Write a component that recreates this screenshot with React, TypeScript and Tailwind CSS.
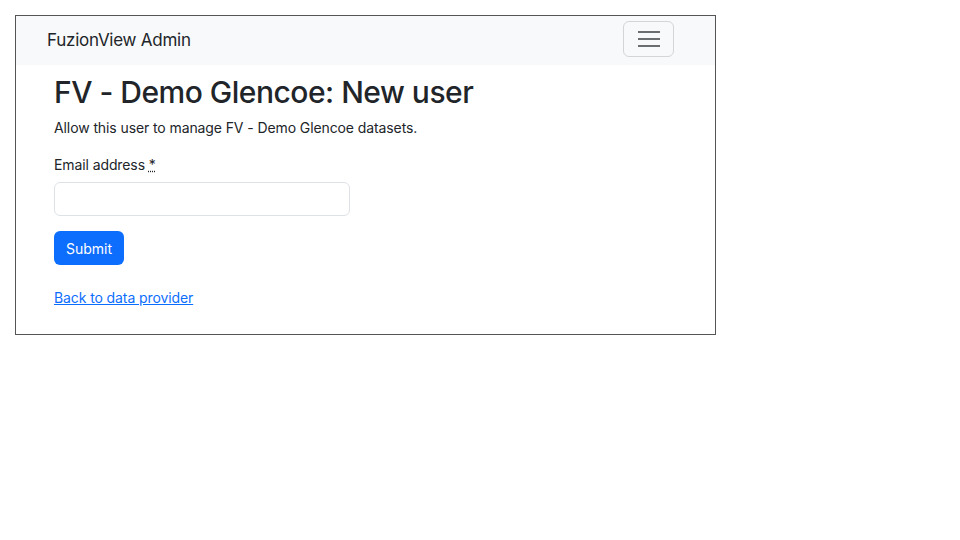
export default function App() {
  return (
    <div className="min-h-[540px] bg-white pt-[15px] pl-[15px] font-['Inter','Liberation_Sans',Arial,sans-serif] text-[#212529]">
      <div className="w-[701px] h-[320px] border border-[#555]">
        <nav className="flex h-[49px] items-start justify-between bg-[#f8f9fa] pl-[31px] pr-[41px] pt-[5px]">
          <span className="mt-[8px] text-[17px] leading-[22px] tracking-[-0.25px]">FuzionView Admin</span>
          <button className="flex h-[36px] w-[51px] flex-col items-center justify-center gap-[5px] rounded-[6px] border border-[#d4d5d6]">
            <span className="block h-[2px] w-[22px] bg-[#6b6e71]" />
            <span className="block h-[2px] w-[22px] bg-[#6b6e71]" />
            <span className="block h-[2px] w-[22px] bg-[#6b6e71]" />
          </button>
        </nav>
        <main className="px-[38px] pt-[9px]">
          <h1 className="text-[30px] font-medium leading-[1.2] tracking-[-0.5px]">FV - Demo Glencoe: New user</h1>
          <p className="mt-[7px] text-[14px] tracking-[-0.1px]">Allow this user to manage FV - Demo Glencoe datasets.</p>
          <form className="mt-[16px]">
            <label className="block text-[14px] tracking-[-0.1px]">
              Email address{" "}
              <abbr title="required" className="underline decoration-dotted">
                *
              </abbr>
            </label>
            <input
              type="email"
              className="mt-[7px] block h-[34px] w-[296px] rounded-[6px] border border-[#dee2e6] px-3 outline-none"
            />
            <button
              type="button"
              className="mt-[15px] h-[34px] w-[70px] rounded-[6px] bg-[#0d6efd] text-[14px] text-white"
            >
              Submit
            </button>
          </form>
          <a href="#" className="mt-[22px] inline-block text-[14px] tracking-[-0.1px] text-[#0d6efd] underline">
            Back to data provider
          </a>
        </main>
      </div>
    </div>
  );
}
